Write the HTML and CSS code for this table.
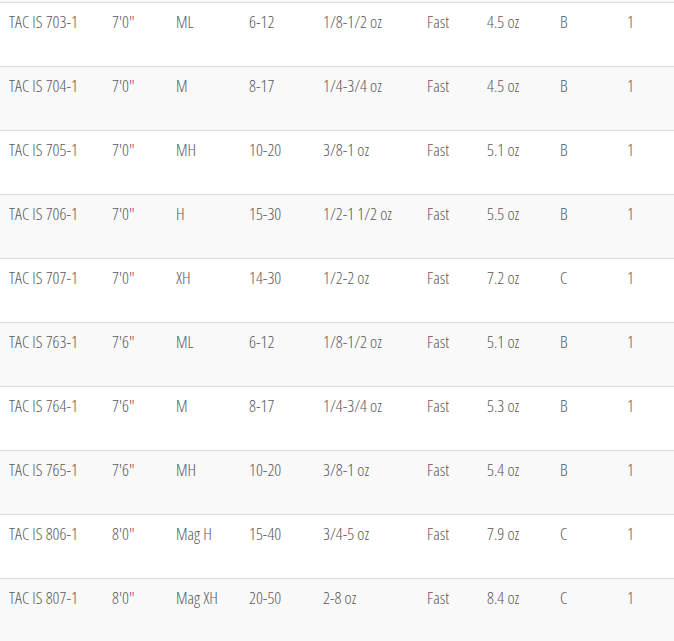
FILE: index.html
```html
<!DOCTYPE html>
<html>
<head>
<meta charset="utf-8">
<link rel="stylesheet" href="styles.css">
</head>
<body>
<div class="prev-row"></div>
<table class="specs">
  <colgroup>
    <col class="c1"><col class="c2"><col class="c3"><col class="c4"><col class="c5"><col class="c6"><col class="c7"><col class="c8"><col class="c9">
  </colgroup>
  <tbody>
    <tr><td>TAC IS 703-1</td><td>7'0"</td><td>ML</td><td>6-12</td><td>1/8-1/2 oz</td><td>Fast</td><td>4.5 oz</td><td>B</td><td>1</td></tr>
    <tr><td>TAC IS 704-1</td><td>7'0"</td><td>M</td><td>8-17</td><td>1/4-3/4 oz</td><td>Fast</td><td>4.5 oz</td><td>B</td><td>1</td></tr>
    <tr><td>TAC IS 705-1</td><td>7'0"</td><td>MH</td><td>10-20</td><td>3/8-1 oz</td><td>Fast</td><td>5.1 oz</td><td>B</td><td>1</td></tr>
    <tr><td>TAC IS 706-1</td><td>7'0"</td><td>H</td><td>15-30</td><td>1/2-1 1/2 oz</td><td>Fast</td><td>5.5 oz</td><td>B</td><td>1</td></tr>
    <tr><td>TAC IS 707-1</td><td>7'0"</td><td>XH</td><td>14-30</td><td>1/2-2 oz</td><td>Fast</td><td>7.2 oz</td><td>C</td><td>1</td></tr>
    <tr><td>TAC IS 763-1</td><td>7'6"</td><td>ML</td><td>6-12</td><td>1/8-1/2 oz</td><td>Fast</td><td>5.1 oz</td><td>B</td><td>1</td></tr>
    <tr><td>TAC IS 764-1</td><td>7'6"</td><td>M</td><td>8-17</td><td>1/4-3/4 oz</td><td>Fast</td><td>5.3 oz</td><td>B</td><td>1</td></tr>
    <tr><td>TAC IS 765-1</td><td>7'6"</td><td>MH</td><td>10-20</td><td>3/8-1 oz</td><td>Fast</td><td>5.4 oz</td><td>B</td><td>1</td></tr>
    <tr><td>TAC IS 806-1</td><td>8'0"</td><td>Mag H</td><td>15-40</td><td>3/4-5 oz</td><td>Fast</td><td>7.9 oz</td><td>C</td><td>1</td></tr>
    <tr><td>TAC IS 807-1</td><td>8'0"</td><td>Mag XH</td><td>20-50</td><td>2-8 oz</td><td>Fast</td><td>8.4 oz</td><td>C</td><td>1</td></tr>
  </tbody>
</table>
</body>
</html>
```

FILE: styles.css
```css
html, body {
  margin: 0;
  padding: 0;
  background: #ffffff;
}

body {
  font-family: "Open Sans", "Liberation Sans", sans-serif;
  font-stretch: 75%;
  font-weight: 300;
  font-size: 17px;
  color: #5a5a5a;
  overflow: hidden;
}

.prev-row {
  height: 2px;
  background: #f9f9f9;
}

.specs {
  width: 674px;
  table-layout: fixed;
  border-collapse: collapse;
}

.c1 { width: 103px; }
.c2 { width: 64px; }
.c3 { width: 73px; }
.c4 { width: 74px; }
.c5 { width: 104px; }
.c6 { width: 60px; }
.c7 { width: 73px; }
.c8 { width: 67px; }
.c9 { width: 56px; }

.specs tr {
  border-top: 1px solid #dddddd;
}

.specs tr:nth-child(even) {
  background: #f9f9f9;
}

.specs td {
  height: 64px;
  box-sizing: border-box;
  padding: 6px 0 0 9px;
  vertical-align: top;
  line-height: 25px;
  white-space: nowrap;
}
```
